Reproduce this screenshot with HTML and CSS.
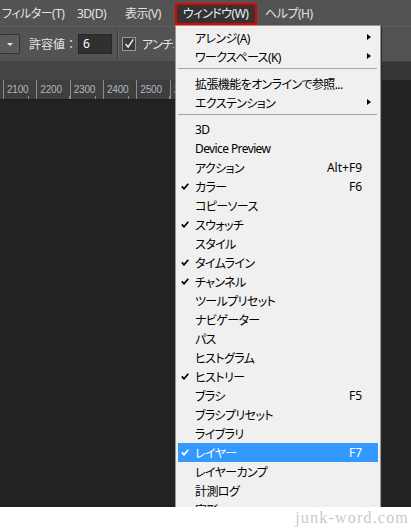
FILE: index.html
```html
<!DOCTYPE html>
<html lang="ja">
<head>
<meta charset="utf-8">
<title>ウィンドウ メニュー</title>
<link rel="stylesheet" href="styles.css">
</head>
<body>
<div class="screen">
  <div class="app">
    <nav class="menubar">
      <span class="mb-item m-filter">フィルター(T)</span>
      <span class="mb-item m-3d">3D(D)</span>
      <span class="mb-item m-view">表示(V)</span>
      <span class="mb-item m-window active">ウィンドウ(W)</span>
      <span class="mb-item m-help">ヘルプ(H)</span>
    </nav>
    <div class="toolbar">
      <span class="dd"><span class="tri"></span></span>
      <span class="label">許容値：</span>
      <span class="input">6</span>
      <span class="vsep"></span>
      <span class="cb"><svg width="14" height="14" viewBox="0 0 14 14"><path d="M3 7 L6 10.5 L12 1.5" fill="none" stroke="#f2f2f2" stroke-width="1.6"/></svg></span>
      <span class="label cbl">アンチエイリアス</span>
    </div>
    <div class="work">
      <div class="doc">
        <div class="tabbar"></div>
        <div class="ruler">
          <span class="cell"><span class="num">2100</span></span>
          <span class="cell"><span class="num">2200</span></span>
          <span class="cell"><span class="num">2300</span></span>
          <span class="cell"><span class="num">2400</span></span>
          <span class="cell"><span class="num">2500</span></span>
          <span class="cell"><span class="num">2600</span></span>
        </div>
        <div class="canvas"></div>
      </div>
      <div class="dock"><div class="dock-top"></div></div>
    </div>

    <div class="dropdown">
      <div class="item">アレンジ(A)<span class="arrow"></span></div>
      <div class="item">ワークスペース(K)<span class="arrow"></span></div>
      <div class="sep"></div>
      <div class="item">拡張機能をオンラインで参照...</div>
      <div class="item">エクステンション<span class="arrow"></span></div>
      <div class="sep"></div>
      <div class="item">3D</div>
      <div class="item">Device Preview</div>
      <div class="item">アクション<span class="sc">Alt+F9</span></div>
      <div class="item checked"><svg class="check" width="8" height="7" viewBox="0 0 8 7"><path d="M0.8 3.4 L3 5.8 L7.3 0.8" fill="none" stroke="currentColor" stroke-width="1.7"/></svg>カラー<span class="sc">F6</span></div>
      <div class="item">コピーソース</div>
      <div class="item checked"><svg class="check" width="8" height="7" viewBox="0 0 8 7"><path d="M0.8 3.4 L3 5.8 L7.3 0.8" fill="none" stroke="currentColor" stroke-width="1.7"/></svg>スウォッチ</div>
      <div class="item">スタイル</div>
      <div class="item checked"><svg class="check" width="8" height="7" viewBox="0 0 8 7"><path d="M0.8 3.4 L3 5.8 L7.3 0.8" fill="none" stroke="currentColor" stroke-width="1.7"/></svg>タイムライン</div>
      <div class="item checked"><svg class="check" width="8" height="7" viewBox="0 0 8 7"><path d="M0.8 3.4 L3 5.8 L7.3 0.8" fill="none" stroke="currentColor" stroke-width="1.7"/></svg>チャンネル</div>
      <div class="item">ツールプリセット</div>
      <div class="item">ナビゲーター</div>
      <div class="item">パス</div>
      <div class="item">ヒストグラム</div>
      <div class="item checked"><svg class="check" width="8" height="7" viewBox="0 0 8 7"><path d="M0.8 3.4 L3 5.8 L7.3 0.8" fill="none" stroke="currentColor" stroke-width="1.7"/></svg>ヒストリー</div>
      <div class="item">ブラシ<span class="sc">F5</span></div>
      <div class="item">ブラシプリセット</div>
      <div class="item">ライブラリ</div>
      <div class="item checked hot"><svg class="check" width="8" height="7" viewBox="0 0 8 7"><path d="M0.8 3.4 L3 5.8 L7.3 0.8" fill="none" stroke="currentColor" stroke-width="1.7"/></svg>レイヤー<span class="sc">F7</span></div>
      <div class="item">レイヤーカンプ</div>
      <div class="item">計測ログ</div>
      <div class="item">字形</div>
    </div>
  </div>
  <footer class="footer"><span class="wm">junk-word.com</span></footer>
</div>
</body>
</html>
```

FILE: styles.css
```css
* { box-sizing: border-box; margin: 0; padding: 0; }
html, body { width: 411px; height: 528px; overflow: hidden; background: #fff; }
body {
  font-family: "Noto Sans", "Noto Sans CJK JP", sans-serif;
  font-size: 12px;
  font-feature-settings: "palt";
}
.screen { display: flex; flex-direction: column; height: 528px; }
.app {
  position: relative;
  height: 507px;
  display: flex;
  flex-direction: column;
  background: #222;
  overflow: hidden;
}

/* menu bar */
.menubar {
  height: 27px;
  flex: none;
  display: flex;
  align-items: flex-start;
  padding-top: 3px;
  background: #535353;
  border-bottom: 1px solid #5d5d5d;
}
.mb-item {
  flex: none;
  height: 22px;
  line-height: 22px;
  color: #e2e2e2;
  white-space: nowrap;
  letter-spacing: -0.5px;
}
.m-filter { width: 68px; padding-left: 2px; }
.m-3d { width: 48px; padding-left: 9px; }
.m-view { width: 59px; padding-left: 9px; }
.m-window { width: 82px; padding-left: 6px; }
.m-help { padding-left: 8px; }
.mb-item.active {
  border: 2px solid #e60000;
  background: #333;
  line-height: 18px;
  color: #f0f0f0;
}

/* options bar */
.toolbar {
  height: 35px;
  flex: none;
  display: flex;
  align-items: center;
  background: #535353;
  border-bottom: 1px solid #444;
  color: #e4e4e4;
  white-space: nowrap;
}
.dd {
  width: 21px;
  height: 20px;
  margin-left: -1px;
  border: 1px solid #323232;
  border-radius: 2px;
  background: #5b5b5b;
  display: flex;
  align-items: center;
  justify-content: center;
}
.tri {
  width: 0; height: 0;
  border-left: 3px solid transparent;
  border-right: 3px solid transparent;
  border-top: 3px solid #e8e8e8;
}
.label {
  margin-left: 9px;
  line-height: 20px;
  font-family: "Noto Sans CJK JP", sans-serif;
  font-feature-settings: normal;
}
.input {
  margin-left: 1px;
  width: 34px;
  height: 20px;
  line-height: 18px;
  padding-left: 4px;
  background: #303030;
  border: 1px solid #282828;
  color: #fff;
}
.vsep {
  margin-left: 5px;
  width: 2px;
  height: 29px;
  border-left: 1px solid #3c3c3c;
  border-right: 1px solid #666;
}
.cb {
  margin-left: 3px;
  width: 14px;
  height: 14px;
  border: 1px solid #9a9a9a;
  background: #3c3c3c;
  display: flex;
  align-items: center;
  justify-content: center;
}
.cb svg { display: block; }
.cbl {
  margin-left: 6px;
  width: 32px;
  overflow: hidden;
  font-feature-settings: "palt";
  letter-spacing: -0.6px;
}

/* work area */
.work { flex: 1; display: flex; min-height: 0; }
.doc { flex: 1; display: flex; flex-direction: column; min-width: 0; }
.dock { width: 30px; flex: none; background: #222; }
.dock-top { height: 18px; background: #353535; }

/* tab well */
.tabbar {
  height: 18px;
  flex: none;
  background: #444;
}

/* ruler */
.ruler {
  height: 20px;
  flex: none;
  display: flex;
  padding-left: 3px;
  background: #3e3e3e;
  border-bottom: 1px solid #1c1c1c;
  overflow: hidden;
}
.cell {
  flex: none;
  width: 33.33px;
  height: 100%;
  border-left: 1px solid #8c8c8c;
  display: flex;
  align-items: flex-end;
  background-image: repeating-linear-gradient(90deg, transparent 0 7.33px, #8c8c8c 7.33px 8.33px);
  background-size: 100% 3px;
  background-position: 0 100%;
  background-repeat: no-repeat;
}
.num {
  font-family: "Liberation Sans", sans-serif;
  font-size: 10px;
  line-height: 10px;
  color: #aeb6c0;
  padding: 0 0 4px 3px;
  background: #3e3e3e;
  letter-spacing: -0.2px;
}

.canvas { flex: 1; background: #222; }

/* dropdown */
.dropdown {
  position: absolute;
  left: 175px;
  top: 25px;
  width: 206px;
  height: 500px;
  padding: 2px 0;
  background: #f0f0f0;
  border: 1px solid #979797;
  box-shadow: 1px 1px 0 #2a2a2a;
  color: #000;
}
.item {
  position: relative;
  height: 19px;
  margin: 0 2px;
  padding: 0 16px 0 17px;
  display: flex;
  align-items: center;
  white-space: nowrap;
  letter-spacing: -0.6px;
}
.item.hot { background: #3399ff; color: #fff; }
.sc { margin-left: auto; letter-spacing: 0; }
.check { position: absolute; left: 3px; top: 6px; color: #000; }
.hot .check { color: #fff; }
.arrow {
  position: absolute;
  right: 7px;
  top: 6px;
  width: 0; height: 0;
  border-left: 4px solid #000;
  border-top: 3.5px solid transparent;
  border-bottom: 3.5px solid transparent;
}
.sep {
  height: 1px;
  margin: 2px 3px 5px 2px;
  background: #a6a6a6;
}

/* footer watermark */
.footer {
  height: 21px;
  flex: none;
  background: #fff;
  display: flex;
  justify-content: flex-end;
  align-items: center;
  padding-right: 2px;
}
.wm {
  font-family: "Liberation Serif", serif;
  font-size: 16px;
  letter-spacing: 1.2px;
  color: #c4cccc;
  line-height: 16px;
  font-feature-settings: normal;
}
```
